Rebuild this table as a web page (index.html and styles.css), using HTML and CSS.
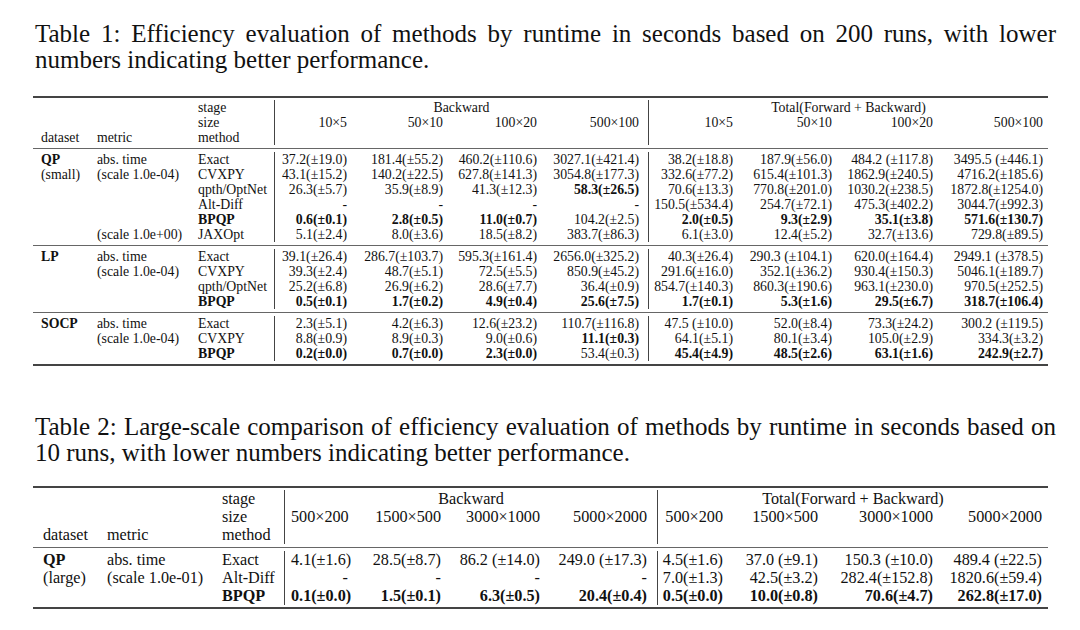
FILE: index.html
```html
<!DOCTYPE html>
<html>
<head>
<meta charset="utf-8">
<link rel="stylesheet" href="styles.css">
</head>
<body>
<div class="page">
  <p class="caption c1"><span class="l1">Table 1: Efficiency evaluation of methods by runtime in seconds based on 200 runs, with lower</span><span class="l2">numbers indicating better performance.</span></p>

  <table class="tbl t1">
    <colgroup>
      <col style="width:58px"><col style="width:101px"><col style="width:82px"><col style="width:79px"><col style="width:96px"><col style="width:94px"><col style="width:105px"><col style="width:91px"><col style="width:99px"><col style="width:101px"><col style="width:109px">
    </colgroup>
    <tr class="sep top"><td colspan="11"><div class="rule thick"></div></td></tr>
    <tr class="ra"><td></td><td></td><td>stage</td><td colspan="4" class="vl c">Backward</td><td colspan="4" class="vl c">Total(Forward + Backward)</td></tr>
    <tr class="r"><td></td><td></td><td>size</td><td class="n">10&times;5</td><td class="n">50&times;10</td><td class="n">100&times;20</td><td class="n">500&times;100</td><td class="n">10&times;5</td><td class="n">50&times;10</td><td class="n">100&times;20</td><td class="n">500&times;100</td></tr>
    <tr class="r"><td>dataset</td><td>metric</td><td>method</td><td></td><td></td><td></td><td></td><td></td><td></td><td></td><td></td></tr>
    <tr class="sep mid"><td colspan="11"><div class="rule thin"></div></td></tr>

    <tr class="r"><td class="b">QP</td><td>abs. time</td><td>Exact</td><td class="n">37.2(&plusmn;19.0)</td><td class="n">181.4(&plusmn;55.2)</td><td class="n">460.2(&plusmn;110.6)</td><td class="n">3027.1(&plusmn;421.4)</td><td class="n">38.2(&plusmn;18.8)</td><td class="n">187.9(&plusmn;56.0)</td><td class="n">484.2 (&plusmn;117.8)</td><td class="n">3495.5 (&plusmn;446.1)</td></tr>
    <tr class="r"><td>(small)</td><td>(scale 1.0e-04)</td><td>CVXPY</td><td class="n">43.1(&plusmn;15.2)</td><td class="n">140.2(&plusmn;22.5)</td><td class="n">627.8(&plusmn;141.3)</td><td class="n">3054.8(&plusmn;177.3)</td><td class="n">332.6(&plusmn;77.2)</td><td class="n">615.4(&plusmn;101.3)</td><td class="n">1862.9(&plusmn;240.5)</td><td class="n">4716.2(&plusmn;185.6)</td></tr>
    <tr class="r"><td></td><td></td><td>qpth/OptNet</td><td class="n">26.3(&plusmn;5.7)</td><td class="n">35.9(&plusmn;8.9)</td><td class="n">41.3(&plusmn;12.3)</td><td class="n b">58.3(&plusmn;26.5)</td><td class="n">70.6(&plusmn;13.3)</td><td class="n">770.8(&plusmn;201.0)</td><td class="n">1030.2(&plusmn;238.5)</td><td class="n">1872.8(&plusmn;1254.0)</td></tr>
    <tr class="r"><td></td><td></td><td>Alt-Diff</td><td class="n">-</td><td class="n">-</td><td class="n">-</td><td class="n">-</td><td class="n">150.5(&plusmn;534.4)</td><td class="n">254.7(&plusmn;72.1)</td><td class="n">475.3(&plusmn;402.2)</td><td class="n">3044.7(&plusmn;992.3)</td></tr>
    <tr class="r"><td></td><td></td><td class="b">BPQP</td><td class="n b">0.6(&plusmn;0.1)</td><td class="n b">2.8(&plusmn;0.5)</td><td class="n b">11.0(&plusmn;0.7)</td><td class="n">104.2(&plusmn;2.5)</td><td class="n b">2.0(&plusmn;0.5)</td><td class="n b">9.3(&plusmn;2.9)</td><td class="n b">35.1(&plusmn;3.8)</td><td class="n b">571.6(&plusmn;130.7)</td></tr>
    <tr class="r"><td></td><td>(scale 1.0e+00)</td><td>JAXOpt</td><td class="n">5.1(&plusmn;2.4)</td><td class="n">8.0(&plusmn;3.6)</td><td class="n">18.5(&plusmn;8.2)</td><td class="n">383.7(&plusmn;86.3)</td><td class="n">6.1(&plusmn;3.0)</td><td class="n">12.4(&plusmn;5.2)</td><td class="n">32.7(&plusmn;13.6)</td><td class="n">729.8(&plusmn;89.5)</td></tr>
    <tr class="sep mid"><td colspan="11"><div class="rule thin"></div></td></tr>

    <tr class="r"><td class="b">LP</td><td>abs. time</td><td>Exact</td><td class="n">39.1(&plusmn;26.4)</td><td class="n">286.7(&plusmn;103.7)</td><td class="n">595.3(&plusmn;161.4)</td><td class="n">2656.0(&plusmn;325.2)</td><td class="n">40.3(&plusmn;26.4)</td><td class="n">290.3 (&plusmn;104.1)</td><td class="n">620.0(&plusmn;164.4)</td><td class="n">2949.1 (&plusmn;378.5)</td></tr>
    <tr class="r"><td></td><td>(scale 1.0e-04)</td><td>CVXPY</td><td class="n">39.3(&plusmn;2.4)</td><td class="n">48.7(&plusmn;5.1)</td><td class="n">72.5(&plusmn;5.5)</td><td class="n">850.9(&plusmn;45.2)</td><td class="n">291.6(&plusmn;16.0)</td><td class="n">352.1(&plusmn;36.2)</td><td class="n">930.4(&plusmn;150.3)</td><td class="n">5046.1(&plusmn;189.7)</td></tr>
    <tr class="r"><td></td><td></td><td>qpth/OptNet</td><td class="n">25.2(&plusmn;6.8)</td><td class="n">26.9(&plusmn;6.2)</td><td class="n">28.6(&plusmn;7.7)</td><td class="n">36.4(&plusmn;0.9)</td><td class="n">854.7(&plusmn;140.3)</td><td class="n">860.3(&plusmn;190.6)</td><td class="n">963.1(&plusmn;230.0)</td><td class="n">970.5(&plusmn;252.5)</td></tr>
    <tr class="r"><td></td><td></td><td class="b">BPQP</td><td class="n b">0.5(&plusmn;0.1)</td><td class="n b">1.7(&plusmn;0.2)</td><td class="n b">4.9(&plusmn;0.4)</td><td class="n b">25.6(&plusmn;7.5)</td><td class="n b">1.7(&plusmn;0.1)</td><td class="n b">5.3(&plusmn;1.6)</td><td class="n b">29.5(&plusmn;6.7)</td><td class="n b">318.7(&plusmn;106.4)</td></tr>
    <tr class="sep mid"><td colspan="11"><div class="rule thin"></div></td></tr>

    <tr class="r"><td class="b">SOCP</td><td>abs. time</td><td>Exact</td><td class="n">2.3(&plusmn;5.1)</td><td class="n">4.2(&plusmn;6.3)</td><td class="n">12.6(&plusmn;23.2)</td><td class="n">110.7(&plusmn;116.8)</td><td class="n">47.5 (&plusmn;10.0)</td><td class="n">52.0(&plusmn;8.4)</td><td class="n">73.3(&plusmn;24.2)</td><td class="n">300.2 (&plusmn;119.5)</td></tr>
    <tr class="r"><td></td><td>(scale 1.0e-04)</td><td>CVXPY</td><td class="n">8.8(&plusmn;0.9)</td><td class="n">8.9(&plusmn;0.3)</td><td class="n">9.0(&plusmn;0.6)</td><td class="n b">11.1(&plusmn;0.3)</td><td class="n">64.1(&plusmn;5.1)</td><td class="n">80.1(&plusmn;3.4)</td><td class="n">105.0(&plusmn;2.9)</td><td class="n">334.3(&plusmn;3.2)</td></tr>
    <tr class="r"><td></td><td></td><td class="b">BPQP</td><td class="n b">0.2(&plusmn;0.0)</td><td class="n b">0.7(&plusmn;0.0)</td><td class="n b">2.3(&plusmn;0.0)</td><td class="n">53.4(&plusmn;0.3)</td><td class="n b">45.4(&plusmn;4.9)</td><td class="n b">48.5(&plusmn;2.6)</td><td class="n b">63.1(&plusmn;1.6)</td><td class="n b">242.9(&plusmn;2.7)</td></tr>
    <tr class="sep bot"><td colspan="11"><div class="rule thick"></div></td></tr>
  </table>

  <p class="caption c2"><span class="l1">Table 2: Large-scale comparison of efficiency evaluation of methods by runtime in seconds based on</span><span class="l2">10 runs, with lower numbers indicating better performance.</span></p>

  <table class="tbl t2">
    <colgroup>
      <col style="width:68px"><col style="width:115px"><col style="width:68px"><col style="width:70px"><col style="width:93px"><col style="width:99px"><col style="width:111px"><col style="width:72px"><col style="width:95px"><col style="width:115px"><col style="width:109px">
    </colgroup>
    <tr class="sep top"><td colspan="11"><div class="rule thick"></div></td></tr>
    <tr class="ra"><td></td><td></td><td>stage</td><td colspan="4" class="vl c">Backward</td><td colspan="4" class="vl c">Total(Forward + Backward)</td></tr>
    <tr class="r"><td></td><td></td><td>size</td><td class="n">500&times;200</td><td class="n">1500&times;500</td><td class="n">3000&times;1000</td><td class="n">5000&times;2000</td><td class="n">500&times;200</td><td class="n">1500&times;500</td><td class="n">3000&times;1000</td><td class="n">5000&times;2000</td></tr>
    <tr class="r"><td>dataset</td><td>metric</td><td>method</td><td></td><td></td><td></td><td></td><td></td><td></td><td></td><td></td></tr>
    <tr class="sep mid"><td colspan="11"><div class="rule thin"></div></td></tr>
    <tr class="r"><td class="b">QP</td><td>abs. time</td><td>Exact</td><td class="n">4.1(&plusmn;1.6)</td><td class="n">28.5(&plusmn;8.7)</td><td class="n">86.2 (&plusmn;14.0)</td><td class="n">249.0 (&plusmn;17.3)</td><td class="n">4.5(&plusmn;1.6)</td><td class="n">37.0 (&plusmn;9.1)</td><td class="n">150.3 (&plusmn;10.0)</td><td class="n">489.4 (&plusmn;22.5)</td></tr>
    <tr class="r"><td>(large)</td><td>(scale 1.0e-01)</td><td>Alt-Diff</td><td class="n">-</td><td class="n">-</td><td class="n">-</td><td class="n">-</td><td class="n">7.0(&plusmn;1.3)</td><td class="n">42.5(&plusmn;3.2)</td><td class="n">282.4(&plusmn;152.8)</td><td class="n">1820.6(&plusmn;59.4)</td></tr>
    <tr class="r"><td></td><td></td><td class="b">BPQP</td><td class="n b">0.1(&plusmn;0.0)</td><td class="n b">1.5(&plusmn;0.1)</td><td class="n b">6.3(&plusmn;0.5)</td><td class="n b">20.4(&plusmn;0.4)</td><td class="n b">0.5(&plusmn;0.0)</td><td class="n b">10.0(&plusmn;0.8)</td><td class="n b">70.6(&plusmn;4.7)</td><td class="n b">262.8(&plusmn;17.0)</td></tr>
    <tr class="sep bot2"><td colspan="11"><div class="rule thick"></div></td></tr>
  </table>
</div>
</body>
</html>
```

FILE: styles.css
```css
* { box-sizing: border-box; }

html, body {
  margin: 0;
  background: #ffffff;
}

body {
  color: #111111;
  font-family: "Liberation Serif", "Times New Roman", serif;
}

.page {
  padding-top: 21px;
}

.caption {
  margin: 0 0 0 35px;
  width: 1021px;
  font-size: 25px;
  line-height: 26px;
}

.caption .l1 {
  display: block;
  text-align: justify;
  text-align-last: justify;
}

.caption .l2 {
  display: block;
}

.c2 {
  margin-top: 48px;
}

.tbl {
  border-collapse: separate;
  border-spacing: 0;
  table-layout: fixed;
  width: 1015px;
  margin-left: 33px;
}

.tbl td {
  padding: 0 6px;
  white-space: nowrap;
  vertical-align: middle;
}

.t1 {
  margin-top: 23px;
  font-size: 13.8px;
}

.t1 td {
  height: 15px;
  line-height: 15px;
}

.t2 {
  margin-top: 20px;
  font-size: 16.2px;
}

.t2 td {
  height: 18px;
  line-height: 18px;
}

.t1 tr.r td:nth-child(1),
.t1 tr.ra td:nth-child(1) { padding-left: 8px; }
.t1 tr.r td:nth-child(7) { padding-right: 9px; }
.t1 tr.r td:nth-child(11) { padding-right: 5px; }

.t2 tr.r td:nth-child(1),
.t2 tr.ra td:nth-child(1) { padding-left: 10px; }
.t2 tr.r td:nth-child(7) { padding-right: 10px; }

.tbl tr.r td:nth-child(8) { padding-left: 4px; }

.tbl tr.r td:nth-child(4),
.tbl tr.r td:nth-child(8),
.tbl td.vl {
  border-left: 1px solid #444444;
}

.tbl td.n { text-align: right; }
.tbl td.c { text-align: center; }
.tbl .b { font-weight: bold; }

.tbl tr.sep td {
  height: auto;
  line-height: 0;
  font-size: 0;
  padding: 0;
}

.tbl tr.top td { padding-bottom: 2px; }
.tbl tr.mid td { padding: 3px 0; }
.tbl tr.bot td { padding-top: 3px; }
.tbl tr.bot2 td { padding-top: 2px; }

.rule { width: 100%; }
.rule.thick { height: 2px; background: #444444; }
.rule.thin { height: 1px; background: #666666; }
```
